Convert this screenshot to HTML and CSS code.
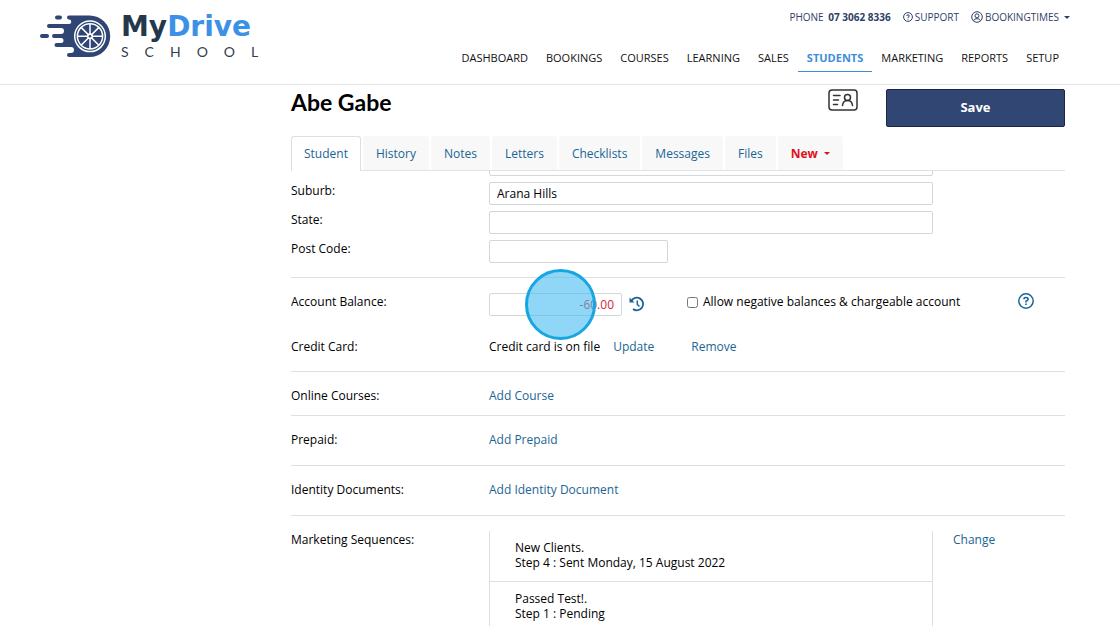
FILE: index.html
```html
<!DOCTYPE html>
<html lang="en">
<head>
  <meta charset="utf-8">
  <meta name="viewport" content="width=device-width, initial-scale=1">
  <title>Abe Gabe - MyDrive School</title>
  <link rel="stylesheet" href="styles.css">
</head>
<body>
  <header class="site-header">
    <a class="logo" href="#">
      <svg class="logo-mark" width="74" height="46" viewBox="0 0 74 46" aria-hidden="true">
        <g fill="#2f4573">
          <path d="M30 1.500H50.500A20.700 20.700 0 0 1 50.500 43H30A2 2 0 0 1 30 39H32A3 3 0 0 0 32 33H17.500A2 2 0 0 1 17.500 29H22A2.500 2.500 0 0 0 22 24H15A2 2 0 0 1 15 20H22A3 3 0 0 0 22 14H10A2 2 0 0 1 10 10H30A2.200 2.200 0 0 0 30 5.500A2 2 0 0 1 30 1.500Z"/>
          <rect x="16" y="1.500" width="7" height="4" rx="2"/>
          <rect x="1" y="20" width="9" height="4" rx="2"/>
        </g>
        <g fill="none" stroke="#fff" stroke-width="1.500">
          <circle cx="51" cy="22.300" r="15.300"/>
          <circle cx="51" cy="22.300" r="12.600"/>
          <path d="M51 9.700V34.900M38.400 22.300H63.600M42.100 13.400L59.900 31.200M59.900 13.400L42.100 31.200"/>
        </g>
        <circle cx="51" cy="22.300" r="3" fill="#fff"/>
        <circle cx="51" cy="22.300" r="1.300" fill="#2f4573"/>
      </svg>
      <span class="logo-text">
        <span class="logo-name">My<span class="logo-accent">Drive</span></span>
        <span class="logo-sub">SCHOOL</span>
      </span>
    </a>
    <div class="header-right">
      <div class="top-links">
        <span class="phone">PHONE <strong>07 3062 8336</strong></span>
        <a href="#">
          <svg width="10" height="10" viewBox="0 0 10 10" fill="none" stroke="currentColor" aria-hidden="true"><circle cx="5" cy="5" r="4.400"/><path d="M3.700 4Q3.800 2.800 5 2.800T6.300 4Q6.300 4.800 5 5.300V6M5 6.800V7.700"/></svg>
          SUPPORT
        </a>
        <a href="#">
          <svg width="12" height="12" viewBox="0 0 12 12" fill="none" stroke="currentColor" aria-hidden="true"><circle cx="6" cy="6" r="5.300"/><circle cx="6" cy="4.800" r="2"/><path d="M2.600 9.800Q3.200 7.800 5 7.800H7Q8.800 7.800 9.400 9.800"/></svg>
          BOOKINGTIMES <i class="caret"></i>
        </a>
      </div>
      <nav class="main-nav">
        <a href="#">DASHBOARD</a>
        <a href="#">BOOKINGS</a>
        <a href="#">COURSES</a>
        <a href="#">LEARNING</a>
        <a href="#">SALES</a>
        <a href="#" class="active">STUDENTS</a>
        <a href="#">MARKETING</a>
        <a href="#">REPORTS</a>
        <a href="#">SETUP</a>
      </nav>
    </div>
  </header>

  <main class="content">
    <div class="title-bar">
      <h1>Abe Gabe</h1>
      <a class="card-link" href="#" aria-label="Contact card">
        <svg width="30" height="22" viewBox="0 0 30 22" fill="none" stroke="#333" stroke-width="1.500" stroke-linecap="round" aria-hidden="true"><rect x="1" y="1" width="28" height="20" rx="3"/><path d="M5.500 6.500H12M5.500 11H10.500M5.500 15.500H9.500"/><circle cx="19.500" cy="8.500" r="3"/><path d="M14.500 16.500Q15 11.500 19.500 11.500T24.500 16.500"/></svg>
      </a>
      <button class="save-button" type="button">Save</button>
    </div>

    <nav class="tabs">
      <a href="#" class="active">Student</a>
      <a href="#">History</a>
      <a href="#">Notes</a>
      <a href="#">Letters</a>
      <a href="#">Checklists</a>
      <a href="#">Messages</a>
      <a href="#">Files</a>
      <a href="#" class="new">New <i class="caret"></i></a>
    </nav>

    <form class="student-form">
      <section class="address">
        <div class="row">
          <span></span>
          <input type="text" aria-label="Address">
        </div>
        <div class="row">
          <label for="suburb">Suburb:</label>
          <input id="suburb" type="text" value="Arana Hills">
        </div>
        <div class="row">
          <label for="state">State:</label>
          <input id="state" type="text">
        </div>
        <div class="row">
          <label for="postcode">Post Code:</label>
          <input id="postcode" class="short" type="text">
        </div>
      </section>

      <section class="account">
        <div class="row balance-row">
          <label for="balance">Account Balance:</label>
          <div class="balance">
            <input id="balance" type="text" value="-60.00">
            <span class="click-marker"></span>
            <a href="#" aria-label="Balance history">
              <svg width="16" height="18" viewBox="0 0 16 18" fill="none" stroke="currentColor" stroke-width="1.800" aria-hidden="true"><path d="M2.300 5A6.300 6.300 0 1 1 4 13"/><path d="M8.300 4.500V8.500L10.500 10.500" stroke-width="1.500"/><path d="M0.500 1.500V6.500H5.500Z" fill="currentColor" stroke="none"/></svg>
            </a>
          </div>
          <label class="check"><input type="checkbox"> Allow negative balances &amp; chargeable account</label>
          <a class="help" href="#" aria-label="Help">
            <svg width="16" height="16" viewBox="0 0 16 16" fill="none" stroke="currentColor" stroke-width="1.500" aria-hidden="true"><circle cx="8" cy="8" r="7.200"/><path d="M5.900 6.200Q6 4.500 8 4.500T10.100 6.200Q10.100 7.300 8 8.200V9.400M8 10.500V12" stroke-width="1.600"/></svg>
          </a>
        </div>
        <div class="row">
          <span>Credit Card:</span>
          <div class="card-info">
            <span>Credit card is on file</span>
            <a href="#">Update</a>
            <a class="remove" href="#">Remove</a>
          </div>
        </div>
      </section>

      <section class="courses">
        <div class="row"><span>Online Courses:</span><a href="#">Add Course</a></div>
      </section>
      <section>
        <div class="row"><span>Prepaid:</span><a href="#">Add Prepaid</a></div>
      </section>
      <section>
        <div class="row"><span>Identity Documents:</span><a href="#">Add Identity Document</a></div>
      </section>
      <section>
        <div class="row">
          <span>Marketing Sequences:</span>
          <ul class="sequences">
            <li>New Clients.<br>Step 4 : Sent Monday, 15 August 2022</li>
            <li>Passed Test!.<br>Step 1 : Pending</li>
          </ul>
          <a class="change" href="#">Change</a>
        </div>
      </section>
    </form>
  </main>
</body>
</html>
```
FILE: styles.css
```css
* {
  box-sizing: border-box;
}

body {
  display: flex;
  flex-direction: column;
  height: 100vh;
  margin: 0;
  overflow: hidden;
  font-family: "Open Sans", "Noto Sans", sans-serif;
  font-size: 12px;
  line-height: 18px;
  color: #000;
  background-color: #fff;
}

a {
  color: #1b6594;
  text-decoration: none;
}

svg {
  display: block;
}

.caret {
  display: inline-block;
  border: 3px solid transparent;
  border-top-color: currentColor;
  border-bottom: 0;
}

/* header */
.site-header {
  display: flex;
  justify-content: space-between;
  flex: none;
  height: 85px;
  padding: 0 50px 0 39px;
  border-bottom: 1px solid #e6e6e6;
}

.logo {
  display: flex;
  align-items: flex-start;
  gap: 8px;
  padding-top: 14px;
}

.logo-text {
  display: flex;
  flex-direction: column;
}

.logo-name {
  font-family: "DejaVu Sans", sans-serif;
  font-size: 28px;
  font-weight: 700;
  line-height: 25px;
  color: #24384c;
}

.logo-accent {
  color: #3c91e6;
}

.logo-sub {
  font-family: Lato, sans-serif;
  font-size: 14px;
  line-height: 25px;
  letter-spacing: 16px;
  color: #33404f;
}

.header-right {
  display: flex;
  flex-direction: column;
  align-items: flex-end;
}

.top-links {
  display: flex;
  gap: 12px;
  padding-top: 8px;
  font-size: 10px;
  color: #2f3f66;
}

.top-links a {
  display: flex;
  align-items: center;
  gap: 2px;
  color: #2f3f66;
}

.top-links strong {
  margin-left: 2px;
}

.top-links .caret {
  margin-left: 3px;
}

.main-nav {
  display: flex;
  padding: 18px 2px 0 0;
}

.main-nav a {
  padding: 5px 9px 4px;
  font-size: 11px;
  color: #111;
}

.main-nav .active {
  border-bottom: 1px solid #3c8dd9;
  font-weight: 700;
  color: #3c8dd9;
}

/* student */
.content {
  display: flex;
  flex-direction: column;
  flex: 1;
  min-height: 0;
  padding: 0 55px 0 291px;
}

.title-bar {
  display: flex;
  align-items: flex-start;
  flex: none;
  height: 51px;
  padding-top: 4px;
}

.title-bar h1 {
  flex: 1;
  margin: 0;
  font-family: Lato, sans-serif;
  font-size: 23px;
  font-weight: 700;
  line-height: 26px;
  color: #000;
}

.card-link {
  margin-right: 28px;
}

.save-button {
  width: 179px;
  height: 38px;
  padding: 0 0 2px;
  border: 1px solid #1c2747;
  border-radius: 2px;
  font-family: inherit;
  font-size: 13px;
  font-weight: 700;
  color: #fff;
  background-color: #324673;
}

.tabs {
  display: flex;
  flex: none;
  gap: 2px;
  height: 35px;
  border-bottom: 1px solid #e0e3e3;
}

.tabs a {
  height: 34px;
  padding: 8px 12px;
  border: 1px solid #f8f8f8;
  border-bottom: 0;
  border-radius: 3px 3px 0 0;
  background-color: #f8f8f8;
}

.tabs .active {
  height: 35px;
  border-color: #dddfe0;
  background-color: #fff;
}

.tabs .new {
  font-weight: 700;
  color: #e01020;
}

.tabs .caret {
  margin: 0 0 3px 3px;
}

/* form */
.student-form {
  flex: 1;
  overflow: hidden;
}

.student-form section {
  padding: 15px 0 16px;
  border-bottom: 1px solid #dfdfdf;
}

.student-form .courses {
  padding-bottom: 10px;
}

.row {
  display: grid;
  grid-template-columns: 198px 444px 1fr;
}

input[type="text"] {
  width: 100%;
  height: 23px;
  padding: 0 7px;
  border: 1px solid #d3d7d9;
  border-radius: 2px;
  font-family: inherit;
  font-size: 12px;
  color: #000;
}

input.short {
  width: 179px;
}

/* the form is scrolled past its first fields */
.student-form .address {
  margin-top: -18px;
  padding: 0 0 14px;
}

.address .row {
  margin-bottom: 6px;
}

.address .row:last-child {
  margin-bottom: 0;
}

.balance-row {
  grid-template-columns: 198px 198px 1fr auto;
  margin-bottom: 22px;
}

.balance {
  display: flex;
  align-items: center;
  gap: 7px;
  position: relative;
}

.balance input[type="text"] {
  width: 133px;
  text-align: right;
  color: #d0283a;
}

.click-marker {
  position: absolute;
  top: -24px;
  left: 36px;
  width: 71px;
  height: 71px;
  border: 3px solid #17a7e0;
  border-radius: 50%;
  background-color: rgba(70, 187, 240, 0.6);
  pointer-events: none;
}

.check {
  display: flex;
  gap: 5px;
}

.check input {
  width: 11px;
  height: 11px;
  margin: 4px 0 0;
}

.help {
  margin-right: 31px;
}

.student-form .account {
  padding-bottom: 15px;
}

.card-info {
  display: flex;
  gap: 13px;
}

.remove {
  margin-left: 24px;
}

.sequences {
  margin: 0;
  padding: 0;
  border: 1px solid #dfdfdf;
  border-width: 0 1px;
  list-style: none;
  line-height: 15px;
}

.sequences li {
  padding: 9px 25px 11px;
  border-bottom: 1px solid #dfdfdf;
}

.change {
  margin-left: 20px;
}
```
